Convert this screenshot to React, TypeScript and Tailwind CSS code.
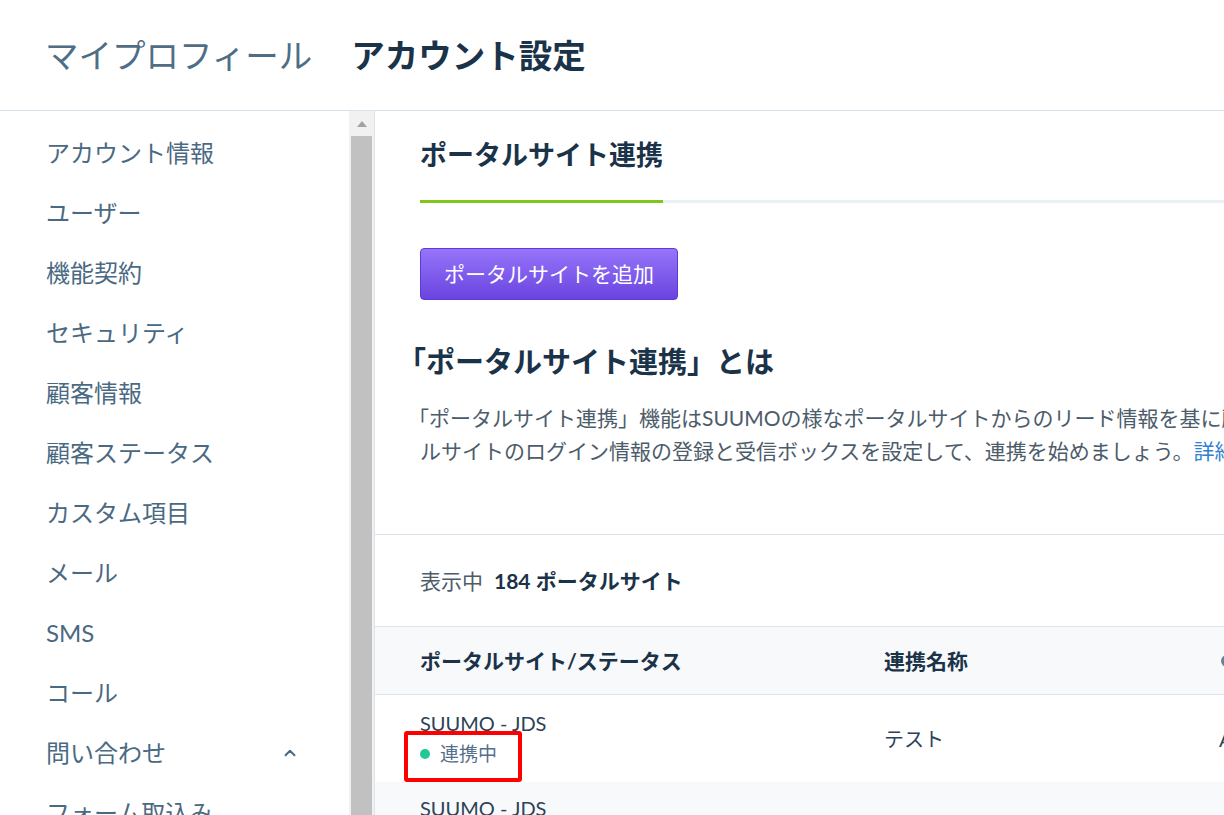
import { ChevronUp } from 'lucide-react'

const menuItems = [
  'アカウント情報',
  'ユーザー',
  '機能契約',
  'セキュリティ',
  '顧客情報',
  '顧客ステータス',
  'カスタム項目',
  'メール',
  'SMS',
  'コール',
  '問い合わせ',
  'フォーム取込み',
]

function Sidebar() {
  return (
    <aside className="w-[349px] shrink-0 pt-[12px] overflow-hidden">
      {menuItems.map((label) => (
        <div key={label} className="h-[60px] flex items-center pl-[46px] pr-[50px] text-[24px] text-[#4a6982]">
          <span>{label}</span>
          {label === '問い合わせ' && (
            <ChevronUp className="ml-auto w-[18px] h-[18px] text-[#4a6982]" strokeWidth={2.6} />
          )}
        </div>
      ))}
    </aside>
  )
}

function Scrollbar() {
  return (
    <div className="w-[25px] shrink-0 bg-[#f1f1f1] flex flex-col px-[2px]">
      <div className="h-[25px] shrink-0 flex items-center justify-center">
        <div className="w-0 h-0 border-l-[5px] border-r-[5px] border-b-[6px] border-l-transparent border-r-transparent border-b-[#a3a3a3]" />
      </div>
      <div className="flex-1 bg-[#c1c1c1]" />
    </div>
  )
}

function PortalTable() {
  return (
    <div>
      {/* Header */}
      <div className="h-[69px] flex items-center border-y border-[#dce5eb] bg-[#f7f9fb] px-[45px] text-[21px] font-bold text-[#1b3349]">
        <div className="w-[464px]">ポータルサイト/ステータス</div>
        <div className="w-[337px]">連携名称</div>
        <div className="w-3 h-3 rounded-full bg-[#6a8194]" />
      </div>

      {/* Row 1 */}
      <div className="relative h-[87px] flex items-center px-[45px] bg-white">
        <div className="w-[464px] flex flex-col">
          <span className="text-[20px] leading-[28px] text-[#2c4256]">SUUMO - JDS</span>
          <span className="mt-[2px] flex items-center gap-[10px] text-[19px] leading-[30px] text-[#55708a]">
            <span className="w-[10px] h-[10px] rounded-full bg-[#21c896]" />
            連携中
          </span>
        </div>
        <div className="w-[335px] text-[20px] text-[#2c4256]">テスト</div>
        <div className="text-[20px] text-[#2c4256]">Aさん</div>
        <div className="absolute left-[29px] top-[36px] w-[118px] h-[51px] border-[4px] border-[#ff0000] rounded-[3px]" />
      </div>

      {/* Row 2 */}
      <div className="h-[87px] flex px-[45px] pt-[12px] bg-[#f7f9fb]">
        <span className="text-[20px] leading-[28px] text-[#2c4256]">SUUMO - JDS</span>
      </div>
    </div>
  )
}

export default function App() {
  return (
    <div className="w-[1224px] h-[815px] overflow-hidden bg-white flex flex-col [font-family:Lato,'Noto_Sans_CJK_JP',sans-serif]">
      {/* Top header */}
      <header className="h-[111px] shrink-0 border-b border-[#d8e2ea] flex items-center pl-[45px] gap-[39px] text-[33.5px]">
        <span className="text-[#4f6e86]">マイプロフィール</span>
        <span className="font-bold text-[#1b3349]">アカウント設定</span>
      </header>

      <div className="flex flex-1 min-h-0">
        <Sidebar />
        <Scrollbar />

        <main className="flex-1 min-w-0 border-l border-[#dce5eb] overflow-hidden">
          <div className="w-[1120px]">
            {/* Intro section */}
            <section className="px-[45px] pb-[67px] border-b border-[#dce5eb]">
              <div className="h-[89px] flex items-center text-[27px] font-bold text-[#1b3349]">
                ポータルサイト連携
              </div>
              <div className="flex h-[3px]">
                <div className="w-[243px] bg-[#7ec81b]" />
                <div className="flex-1 bg-[#e9f1f4]" />
              </div>

              <button className="mt-[45px] h-[52px] w-[258px] rounded-[4px] border border-[#5b3bd6] bg-gradient-to-b from-[#9774fa] to-[#6b43df] text-[21px] text-white">
                ポータルサイトを追加
              </button>

              <h2 className="mt-[42px] leading-[40px] text-[29px] font-bold text-[#1b3349] -ml-[23px] whitespace-nowrap">
                「ポータルサイト連携」とは
              </h2>

              <p className="mt-[19px] leading-[33px] text-[21px] text-[#4d5c6a] whitespace-nowrap">
                <span className="-ml-[12px]">「ポータルサイト連携」機能はSUUMOの様なポータルサイトからのリード情報を基に顧客を自動で作成・更新します。ポータ</span>
                <br />
                ルサイトのログイン情報の登録と受信ボックスを設定して、連携を始めましょう。
                <span className="text-[#2f7fd1]">詳細はこちら</span>
              </p>
            </section>

            {/* Count */}
            <div className="h-[91px] flex items-center px-[45px] text-[21px] text-[#4d5c6a]">
              表示中
              <span className="ml-[11px] font-bold text-[#1b3349]">184 ポータルサイト</span>
            </div>

            <PortalTable />
          </div>
        </main>
      </div>
    </div>
  )
}
